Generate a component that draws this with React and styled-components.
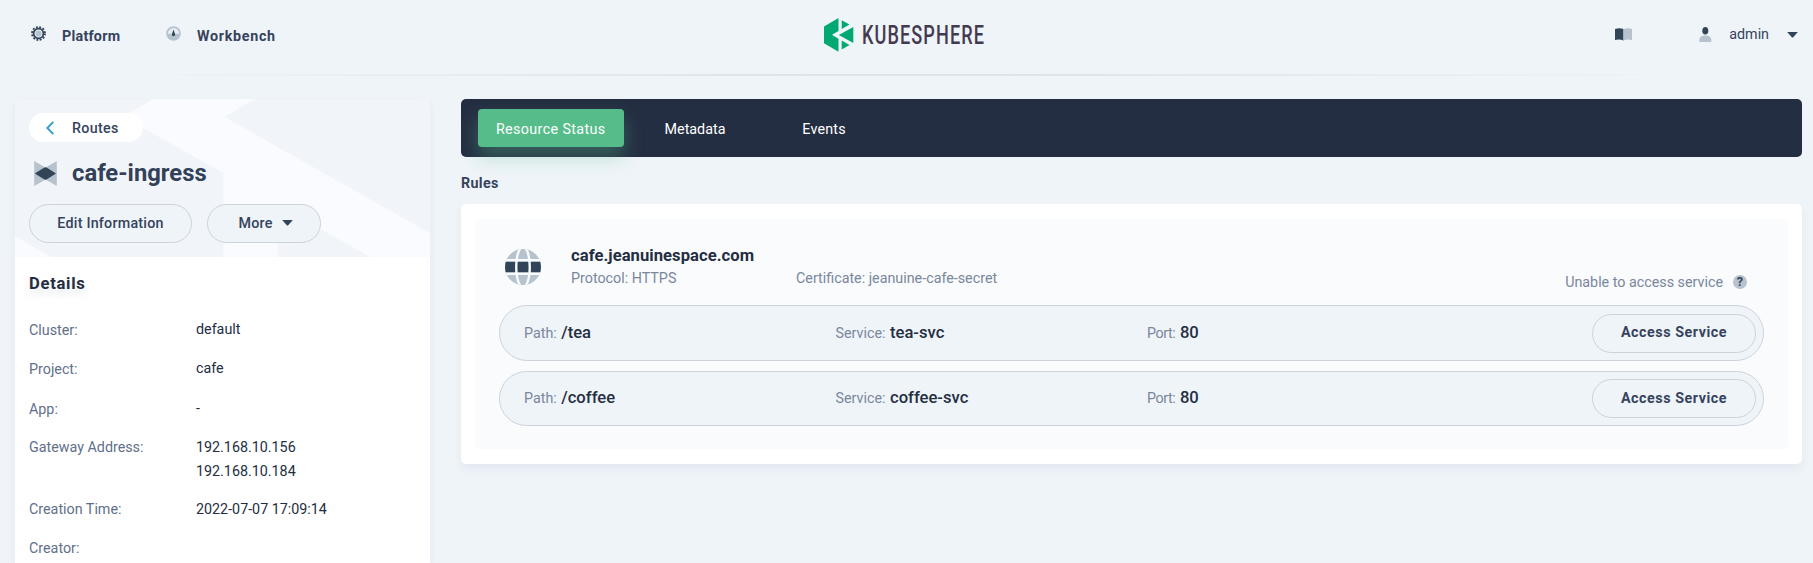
import React from 'react';
import styled, { createGlobalStyle } from 'styled-components';

const c = {
  page: '#eff4f9',
  ink: '#242e42',
  soft: '#36435c',
  label: '#5f708a',
  muted: '#79879c',
  line: '#ccd3db',
  iconDark: '#324558',
  iconLight: '#b6c2cd',
  green: '#55bc8a',
};

const GlobalStyle = createGlobalStyle`
  * { box-sizing: border-box; }
  body {
    margin: 0;
    background: ${c.page};
    color: ${c.ink};
    font-family: Roboto, "Liberation Sans", sans-serif;
    font-size: 14.3px;
    line-height: 24px;
  }
  svg { display: block; flex: none; }
`;

const Shell = styled.div`
  height: 563px;
  overflow: hidden;
`;

const Text = styled.span`
  color: ${(p) => p.$color || c.ink};
  font-size: ${(p) => p.$size || 14.3}px;
  font-weight: ${(p) => p.$weight || 400};
  letter-spacing: ${(p) => p.$track || 0}px;
  white-space: nowrap;
`;

const TopBar = styled.header`
  display: grid;
  grid-template-columns: 793px 166px 1fr;
  height: 76px;
  padding: 0 15px 0 31px;
`;

const TopNav = styled.nav`
  display: flex;
  align-items: flex-start;
  padding-top: 24px;
`;

const NavItem = styled.a`
  display: flex;
  width: ${(p) => p.$width}px;
  gap: 16px;
  svg { margin-top: 2px; }
`;

const LogoLink = styled.a`
  padding-top: 18px;
  svg { overflow: visible; }
`;

const UserNav = styled(TopNav)`
  justify-content: flex-end;
  padding-top: 22px;
`;

const DocsLink = styled.a`
  margin: 6px 67px 0 0;
`;

const UserMenu = styled.a`
  display: flex;
  & > svg:first-child { margin: 5px 17px 0 0; }
  & > svg:last-child { margin: 10px 0 0 18px; }
`;

const Divider = styled.div`
  height: 2px;
  margin-top: -2px;
  background: linear-gradient(to right, rgba(216, 223, 230, 0) 6%, #dde3e9 45%, #dde3e9 55%, rgba(216, 223, 230, 0) 94%);
`;

const Layout = styled.main`
  display: grid;
  grid-template-columns: 415.5px 1341px;
  column-gap: 31px;
  height: 487px;
  padding: 23px 0 0 14.5px;
`;

const SideCard = styled.aside`
  height: 464px;
  border-radius: 5px 5px 0 0;
  background: #fff;
  box-shadow: 0 4px 8px rgba(36, 46, 66, 0.06);
`;

const SideHead = styled.div`
  position: relative;
  height: 158px;
  padding: 14px 14.5px;
  border-radius: 5px 5px 0 0;
  background: #f1f5fa;
  overflow: hidden;
`;

const Pattern = styled.svg`
  position: absolute;
  inset: 0;
`;

const BackPill = styled.a`
  position: relative;
  display: flex;
  align-items: center;
  gap: 18px;
  width: 114px;
  height: 29px;
  padding-left: 17px;
  border-radius: 15px;
  background: #fff;
`;

const TitleRow = styled.div`
  position: relative;
  display: flex;
  align-items: center;
  gap: 15px;
  height: 30px;
  margin: 16px 0;
  padding-left: 5px;
`;

const ButtonRow = styled.div`
  position: relative;
  display: flex;
  gap: 15px;
`;

const Button = styled.button`
  display: flex;
  align-items: center;
  justify-content: center;
  gap: 9px;
  width: ${(p) => p.$width}px;
  height: 39px;
  padding: 0 0 ${(p) => p.$lift || 1}px ${(p) => p.$shift || 0}px;
  border: 1.2px solid ${c.line};
  border-radius: 20px;
  background: ${c.page};
  font: inherit;
`;

const Details = styled.section`
  padding: 14px 14.5px 0;
`;

const DetailsTitle = styled.h2`
  margin: 0 0 20px;
  font-size: 16.6px;
  font-weight: 700;
  line-height: 26px;
  letter-spacing: 0.7px;
  text-shadow: 0 5px 9px rgba(36, 46, 66, 0.12);
`;

const DetailRow = styled.dl`
  display: grid;
  grid-template-columns: 167px 1fr;
  margin: 0 0 ${(p) => p.$gap}px;
  line-height: 24px;
  dt { color: ${c.label}; padding-top: ${(p) => p.$drop || 0}px; height: 24px; }
  dd { margin: 0; }
`;

const TabBar = styled.nav`
  display: flex;
  height: 58px;
  padding: 10px 17px;
  border-radius: 5px;
  background: #242e42;
`;

const Tab = styled.a`
  display: flex;
  align-items: center;
  justify-content: center;
  width: ${(p) => p.$width}px;
  height: 38px;
  padding-top: 1px;
  border-radius: 4px;
  color: #fff;
  letter-spacing: ${(p) => p.$track}px;
  ${(p) => p.$active && `
    background: ${c.green};
    box-shadow: 0 10px 19px rgba(85, 188, 138, 0.36);
  `}
`;

const SectionTitle = styled.h3`
  margin: 14px 0 9px;
  line-height: 24px;
  font-size: 14.3px;
  letter-spacing: 0.35px;
  color: ${c.soft};
`;

const Panel = styled.section`
  height: 260px;
  padding: 15px 14px;
  border-radius: 5px;
  background: #fff;
  box-shadow: 0 5px 10px rgba(36, 46, 66, 0.06);
`;

const RuleCard = styled.div`
  height: 230px;
  padding: 30px 24px 0;
  border-radius: 5px;
  background: #fafbfd;
`;

const RuleHead = styled.div`
  display: grid;
  grid-template-columns: 66px 225px 1fr auto;
  height: 56px;
  padding: 0 17px 0 6px;
`;

const RuleName = styled.div`
  display: flex;
  flex-direction: column;
  margin-top: -5px;
  & > span { height: 22px; }
`;

const Certificate = styled.div`
  padding-top: 17px;
`;

const AccessHint = styled.div`
  display: flex;
  align-items: center;
  gap: 9.5px;
  height: 24px;
  margin-top: 21px;
`;

const HelpDot = styled.span`
  display: grid;
  place-items: center;
  width: 14.5px;
  height: 14.5px;
  border-radius: 50%;
  background: ${c.iconLight};
  color: ${c.iconDark};
  font-size: 12.5px;
  font-weight: 700;
  line-height: 14px;
`;

const PathRow = styled.div`
  display: grid;
  grid-template-columns: 311.5px 311.5px 1fr auto;
  align-items: center;
  height: ${(p) => p.$height}px;
  margin-bottom: 10px;
  padding: 0 7px 0 24px;
  border: 1.2px solid ${c.line};
  border-radius: 28px;
  background: ${c.page};
`;

const Pair = styled.div`
  display: flex;
  align-items: baseline;
  gap: 4.5px;
  margin-top: -1px;
`;

const Gear = () => (
  <svg width="15" height="15" viewBox="0 0 16 16">
    <circle cx="8" cy="8" r="6.9" fill="none" stroke={c.iconDark} strokeWidth="2" strokeDasharray="2 1.613" />
    <circle cx="8" cy="8" r="5.2" fill={c.page} stroke={c.iconDark} strokeWidth="1.9" />
    <circle cx="8" cy="8" r="3.3" fill={c.iconLight} />
  </svg>
);

const Gauge = () => (
  <svg width="15" height="15" viewBox="0 0 15 15">
    <circle cx="7.5" cy="7.5" r="7.3" fill={c.iconLight} />
    <path d="M1.8 7.8a5.7 5.7 0 0 1 11.4 0z" fill="#e6ecf1" />
    <path d="M7.5 3.4 9 8a1.6 1.6 0 1 1-3 0z" fill={c.iconDark} />
  </svg>
);

const Book = () => (
  <svg width="17" height="13" viewBox="0 0 17 13">
    <path d="M0 1Q4.5-.6 8.5 1v11.5Q4.5 11 0 12z" fill={c.iconDark} />
    <path d="M8.5 1Q12.5-.6 17 1v11Q12.5 11 8.5 12.5z" fill={c.iconLight} />
  </svg>
);

const Person = () => (
  <svg width="13" height="16" viewBox="0 0 13 16">
    <path d="M.4 15v-2.2C.4 10 3 8.600 6.300 8.600s6 1.400 6 4.200V15z" fill={c.iconLight} />
    <ellipse cx="6.3" cy="3.8" rx="3" ry="3.8" fill={c.iconDark} />
  </svg>
);

const Caret = () => (
  <svg width="11" height="6" viewBox="0 0 11 6">
    <path d="M.2 0h10.6L6.2 5.300q-.7.600-1.400 0z" fill={c.iconDark} />
  </svg>
);

const Chevron = () => (
  <svg width="8" height="14" viewBox="0 0 8 14">
    <path d="M7.3.8 1.3 7l6 6.200" fill="none" stroke="#329dce" strokeWidth="1.9" />
  </svg>
);

const RouteIcon = () => (
  <svg width="23" height="25" viewBox="0 0 23 25">
    <path d="M.2 0 11.5 6.500 22.800 0v25L11.500 18.500.2 25z" fill={c.iconLight} />
    <path d="M.8 12.500 10 6.700q1.500-.9 3 0l9 5.800-9 5.800q-1.500.9-3 0z" fill={c.iconDark} />
  </svg>
);

const Globe = () => (
  <svg width="36" height="36" viewBox="0 0 36 36">
    <defs>
      <clipPath id="globe-disc"><circle cx="18" cy="18" r="18" /></clipPath>
    </defs>
    <g clipPath="url(#globe-disc)">
      <rect width="36" height="36" fill={c.iconLight} />
      <rect y="12.5" width="36" height="11" fill={c.iconDark} />
      <path d="M0 11.200h36M0 24.800h36" stroke="#fafbfd" strokeWidth="2.6" />
      <path d="M15.500-1C9.800 7 9.800 29 15.500 37M20.500-1C26.200 7 26.200 29 20.500 37" fill="none" stroke="#fafbfd" strokeWidth="2.4" />
    </g>
  </svg>
);

const Logo = () => (
  <svg width="166" height="34" viewBox="0 0 166 34">
    <path d="M0 8.500 14.500 0v13L8 16.800l6.500 3.900v13L0 25.200z" fill="#00a971" />
    <path d="M17.700 2.200 25.500 6.600 17.700 11zM29.300 9v16L14.800 16.900zM17.700 22.600l7.800 4.500-7.800 4.400z" fill="#00a971" />
    <text
      x="38"
      y="26"
      textLength="123"
      lengthAdjust="spacingAndGlyphs"
      fontFamily="Roboto, sans-serif"
      fontSize="25"
      fontWeight="500"
      letterSpacing="1.5"
      fill="#443a4f"
    >
      KUBESPHERE
    </text>
  </svg>
);

const details = [
  { label: 'Cluster:', values: ['default'], gap: 15.3, drop: 1 },
  { label: 'Project:', values: ['cafe'], gap: 15.3, drop: 1 },
  { label: 'App:', values: ['-'], gap: 15, drop: 1 },
  { label: 'Gateway Address:', values: ['192.168.10.156', '192.168.10.184'], gap: 14.3 },
  { label: 'Creation Time:', values: ['2022-07-07 17:09:14'], gap: 15.3 },
  { label: 'Creator:', values: [], gap: 0 },
];

const tabs = [
  { name: 'Resource Status', width: 145.5, track: 0.38, active: true },
  { name: 'Metadata', width: 143, track: 0 },
  { name: 'Events', width: 115, track: 0.2 },
];

const paths = [
  { path: '/tea', service: 'tea-svc', port: '80', height: 56 },
  { path: '/coffee', service: 'coffee-svc', port: '80', height: 55 },
];

export default function App() {
  return (
    <Shell>
      <GlobalStyle />
      <TopBar>
        <TopNav>
          <NavItem $width={135}>
            <Gear />
            <Text $weight={700} $color={c.soft} $track={0.25}>Platform</Text>
          </NavItem>
          <NavItem>
            <Gauge />
            <Text $weight={700} $color={c.soft} $track={0.7}>Workbench</Text>
          </NavItem>
        </TopNav>
        <LogoLink><Logo /></LogoLink>
        <UserNav>
          <DocsLink><Book /></DocsLink>
          <UserMenu>
            <Person />
            <Text $color={c.soft}>admin</Text>
            <Caret />
          </UserMenu>
        </UserNav>
      </TopBar>
      <Divider />
      <Layout>
        <SideCard>
          <SideHead>
            <Pattern width="416" height="158" viewBox="14.5 99 416 158">
              <path
                d="M153 99h101l-30 18 207 117v23h-61l-93-52v52h-54v-84l-100-56zM14 236v21h37z"
                fill="#fafbfe"
              />
            </Pattern>
            <BackPill>
              <Chevron />
              <Text $weight={500} $color={c.soft} $track={0.3}>Routes</Text>
            </BackPill>
            <TitleRow>
              <RouteIcon />
              <Text $size={23.8} $weight={700} $color="#324058">cafe-ingress</Text>
            </TitleRow>
            <ButtonRow>
              <Button $width={163}>
                <Text $weight={500} $color={c.soft} $track={0.22}>Edit Information</Text>
              </Button>
              <Button $width={114} $shift={3}>
                <Text $weight={500} $color={c.soft} $track={0.2}>More</Text>
                <Caret />
              </Button>
            </ButtonRow>
          </SideHead>
          <Details>
            <DetailsTitle>Details</DetailsTitle>
            {details.map((d) => (
              <DetailRow key={d.label} $gap={d.gap} $drop={d.drop}>
                <dt>{d.label}</dt>
                <dd>{d.values.map((v) => <div key={v}>{v}</div>)}</dd>
              </DetailRow>
            ))}
          </Details>
        </SideCard>
        <div>
          <TabBar>
            {tabs.map((t) => (
              <Tab key={t.name} $width={t.width} $track={t.track} $active={t.active}>{t.name}</Tab>
            ))}
          </TabBar>
          <SectionTitle>Rules</SectionTitle>
          <Panel>
            <RuleCard>
              <RuleHead>
                <Globe />
                <RuleName>
                  <Text $size={16.6} $weight={700} $track={0.05}>cafe.jeanuinespace.com</Text>
                  <Text $color={c.muted}>Protocol: HTTPS</Text>
                </RuleName>
                <Certificate>
                  <Text $color={c.muted}>Certificate: jeanuine-cafe-secret</Text>
                </Certificate>
                <AccessHint>
                  <Text $color={c.muted}>Unable to access service</Text>
                  <HelpDot>?</HelpDot>
                </AccessHint>
              </RuleHead>
              {paths.map((p) => (
                <PathRow key={p.path} $height={p.height}>
                  <Pair>
                    <Text $color={c.muted}>Path:</Text>
                    <Text $size={16.6} $weight={500}>{p.path}</Text>
                  </Pair>
                  <Pair>
                    <Text $color={c.muted}>Service:</Text>
                    <Text $size={16.6} $weight={500}>{p.service}</Text>
                  </Pair>
                  <Pair>
                    <Text $color={c.muted} $track={-0.4}>Port:</Text>
                    <Text $size={16.6} $weight={500}>{p.port}</Text>
                  </Pair>
                  <Button $width={164} $lift={2}>
                    <Text $weight={700} $color={c.soft} $track={0.55}>Access Service</Text>
                  </Button>
                </PathRow>
              ))}
            </RuleCard>
          </Panel>
        </div>
      </Layout>
    </Shell>
  );
}
